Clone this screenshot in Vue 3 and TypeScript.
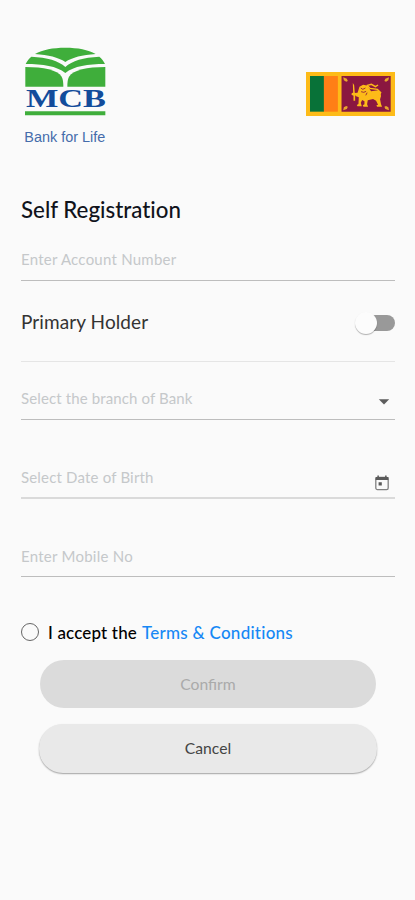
<script setup lang="ts">
import { ref } from 'vue'

const account = ref('')
const mobile = ref('')
const primary = ref(false)
const accepted = ref(false)
</script>

<template>
  <main class="screen">
    <header class="header">
      <svg class="logo" viewBox="0 0 330 330" role="img" aria-label="MCB Bank for Life">
        <g fill="#3fae3b">
          <path d="M75 42C98 29 128 23 166 23s68 6 91 19c-40 3-70 10-91 24-21-14-51-21-91-24Z" />
          <path d="M64 50c48 2 82 12 102 31 20-19 54-29 102-31 7 6 13 13 17 22-52 0-93 6-119 27-26-21-67-27-119-27 4-9 10-16 17-22Z" />
          <path d="M46 81c55 0 96 9 109 29 4 7 5 17 5 30H46Z" />
          <path d="M286 81c-55 0-96 9-109 29-4 7-5 17-5 30h114Z" />
          <path d="M45 214h241v12H45Z" />
        </g>
        <text class="mcb" x="48" y="200" textLength="240" lengthAdjust="spacingAndGlyphs">MCB</text>
        <text class="tagline" x="43" y="307" textLength="243" lengthAdjust="spacingAndGlyphs">Bank for Life</text>
      </svg>
      <svg class="flag" viewBox="18 20 268 132" preserveAspectRatio="none" role="img" aria-label="Sri Lanka">
        <path fill="#fdbb18" d="M18 20h268v132H18Z" />
        <path fill="#087238" d="M30 32h42v107H30Z" />
        <path fill="#ff7f16" d="M72 32h42v107H72Z" />
        <path fill="#8a1740" d="M125 32h148v107H125Z" />
        <g fill="#e9a52c">
          <path d="M130 36l11 4 3 7-5 2-7-4ZM268 36l-11 4-3 7 5 2 7-4ZM130 135l11-4 3-7-5-2-7 4ZM268 135l-11-4-3-7 5-2 7 4Z" />
        </g>
        <g fill="#fdbb18">
          <path d="M159 53l4 7 2 23 6-1 2 5-7 3v16h-5V91l-6-3 1-5 4-1Z" />
          <path d="M175 77l4-13 11-6 14 3 5 9 5 8 21-3 6 5 3 12-3 10 3 15 3 7h-15l-2-4 5-2-6-12-9-5-16 4-2 12 3 7h-14l-2-4 5-3v-9l-7-4-4 8 3 11h-13l-2-4 5-3 1-20-10-4-1-7 7-3Z" />
        </g>
        <path fill="none" stroke="#fdbb18" stroke-width="4" d="M238 91l5-9-10-10-22-3-8-9 12-3 12 7 8-5" />
        <path fill="none" stroke="#8a1740" stroke-width="2.5" d="M183 68l6 4 8-4M184 79l8 2 7-3M202 82l-4 8" />
      </svg>
    </header>

    <form class="form" @submit.prevent>
      <h1 class="title">Self Registration</h1>
      <label class="field account">
        <input v-model="account" class="t-account" placeholder="Enter Account Number" />
      </label>
      <div class="holder">
        <span class="holder-text">Primary Holder</span>
        <button type="button" class="switch" :class="{ on: primary }" role="switch" :aria-checked="primary" aria-label="Primary Holder" @click="primary = !primary">
          <span class="thumb"></span>
        </button>
      </div>
      <div class="field branch">
        <span class="hint t-branch">Select the branch of Bank</span>
        <svg class="caret" viewBox="0 0 12 6"><path fill="#5c5c5c" d="M.8.3h10.400L6 5.600Z" /></svg>
      </div>
      <div class="field birth">
        <span class="hint t-birth">Select Date of Birth</span>
        <svg class="calendar" viewBox="0 0 14 16">
          <rect x=".8" y="2.4" width="12.4" height="12.2" rx="1.6" fill="none" stroke="#808080" stroke-width="1.3" />
          <path fill="#5a5a5a" d="M.6 2h1.800V.5h1.500V2h6.200V.5h1.500V2h1.800v3H.6ZM3.600 7.200h3.200v3.200H3.600Z" />
        </svg>
      </div>
      <label class="field mobile">
        <input v-model="mobile" class="t-mobile" placeholder="Enter Mobile No" />
      </label>
      <div class="accept">
        <button type="button" class="radio" :class="{ on: accepted }" role="radio" :aria-checked="accepted" aria-label="Accept" @click="accepted = !accepted"></button>
        <span class="accept-text">I accept the</span>
        <a class="terms">Terms &amp; Conditions</a>
      </div>
      <div class="actions">
        <button type="button" class="pill confirm">Confirm</button>
        <button type="button" class="pill cancel">Cancel</button>
      </div>
    </form>
  </main>
</template>

<style>
body { background: #fafafa; }
</style>

<style scoped>
.screen {
  box-sizing: border-box;
  width: 415px;
  height: 900px;
  padding-top: 40px;
  background: #fafafa;
  font-family: Lato, "Liberation Sans", sans-serif;
  color: #111;
}
.screen * { box-sizing: border-box; }
.header {
  display: flex;
  justify-content: space-between;
  height: 110px;
  padding: 0 20px 0 10px;
}
.logo { width: 110px; height: 110px; }
.mcb { font: bold 73px "Liberation Serif", serif; fill: #124c9b; }
.tagline { font: 42px "Liberation Sans", sans-serif; fill: #456cab; }
.flag { width: 89px; height: 44px; margin-top: 32px; }
.form { padding: 0 20px 0 21px; }
.title {
  display: flex;
  align-items: center;
  height: 79px;
  margin: 0;
  padding-top: 40px;
  font-size: 22.3px;
  font-weight: 500;
  font-variant-ligatures: none;
  line-height: 39px;
  color: #10131b;
  white-space: nowrap;
}
.field {
  display: flex;
  align-items: flex-start;
  justify-content: space-between;
  border-bottom: 1px solid #bdbdbd;
}
input {
  width: 300px;
  height: 20px;
  padding: 0;
  border: 0;
  outline: 0;
  background: transparent;
  font-family: inherit;
  font-size: 15px;
  color: #111;
}
input::placeholder { color: #c5c8ca; opacity: 1; }
.hint { font-size: 15px; line-height: 20px; color: #c5c8ca; white-space: nowrap; }
.t-account { letter-spacing: .24px; }
.t-branch { letter-spacing: .12px; }
.t-birth { letter-spacing: .18px; }
.t-mobile { letter-spacing: .25px; }
.account { height: 52px; padding-top: 20px; }
.holder {
  display: flex;
  align-items: center;
  justify-content: space-between;
  height: 81px;
  padding-top: 3px;
  border-bottom: 1px solid #e5e5e5;
}
.holder-text { padding-bottom: 2px; font-size: 19px; letter-spacing: .09px; color: #333; white-space: nowrap; }
.switch {
  position: relative;
  width: 36px;
  height: 16px;
  padding: 0;
  border: 0;
  border-radius: 8px;
  background: #999;
}
.thumb {
  position: absolute;
  top: -3px;
  left: -4px;
  width: 22px;
  height: 22px;
  border-radius: 50%;
  background: #fcfcfc;
  box-shadow: 0 1px 1px rgba(0, 0, 0, .3);
}
.switch.on .thumb { left: 18px; }
.branch { height: 58px; padding-top: 26px; }
.caret { width: 12px; height: 6px; margin: 11px 5px 0 0; }
.birth { height: 79px; padding-top: 47px; border-bottom: 2px solid #dadada; }
.calendar { width: 14px; height: 16px; margin: 8px 6px 0 0; }
.mobile { height: 78px; padding-top: 47px; }
.accept { display: flex; align-items: center; height: 30px; margin-top: 40px; white-space: nowrap; font-size: 17px; }
.radio { width: 18px; height: 18px; padding: 0; border: 1.5px solid #666; border-radius: 50%; background: transparent; }
.radio.on { background: #148aff; }
.accept-text { width: 94px; margin-left: 9px; font-weight: 500; letter-spacing: .15px; color: #000; }
.terms { font-weight: 500; letter-spacing: .26px; color: #1688f5; }
.actions { display: flex; flex-direction: column; gap: 16px; padding: 13px 19px 0; }
.pill {
  height: 48px;
  padding: 0;
  border: 0;
  border-radius: 24px;
  font-family: inherit;
  font-size: 15.7px;
}
.confirm { background: #dbdbdb; color: #aaa; }
.cancel { margin: 0 -1px; height: 49px; padding-bottom: 1px; background: #e9e9e9; color: #444; box-shadow: 0 1px 1.5px rgba(0, 0, 0, .35); }
</style>
